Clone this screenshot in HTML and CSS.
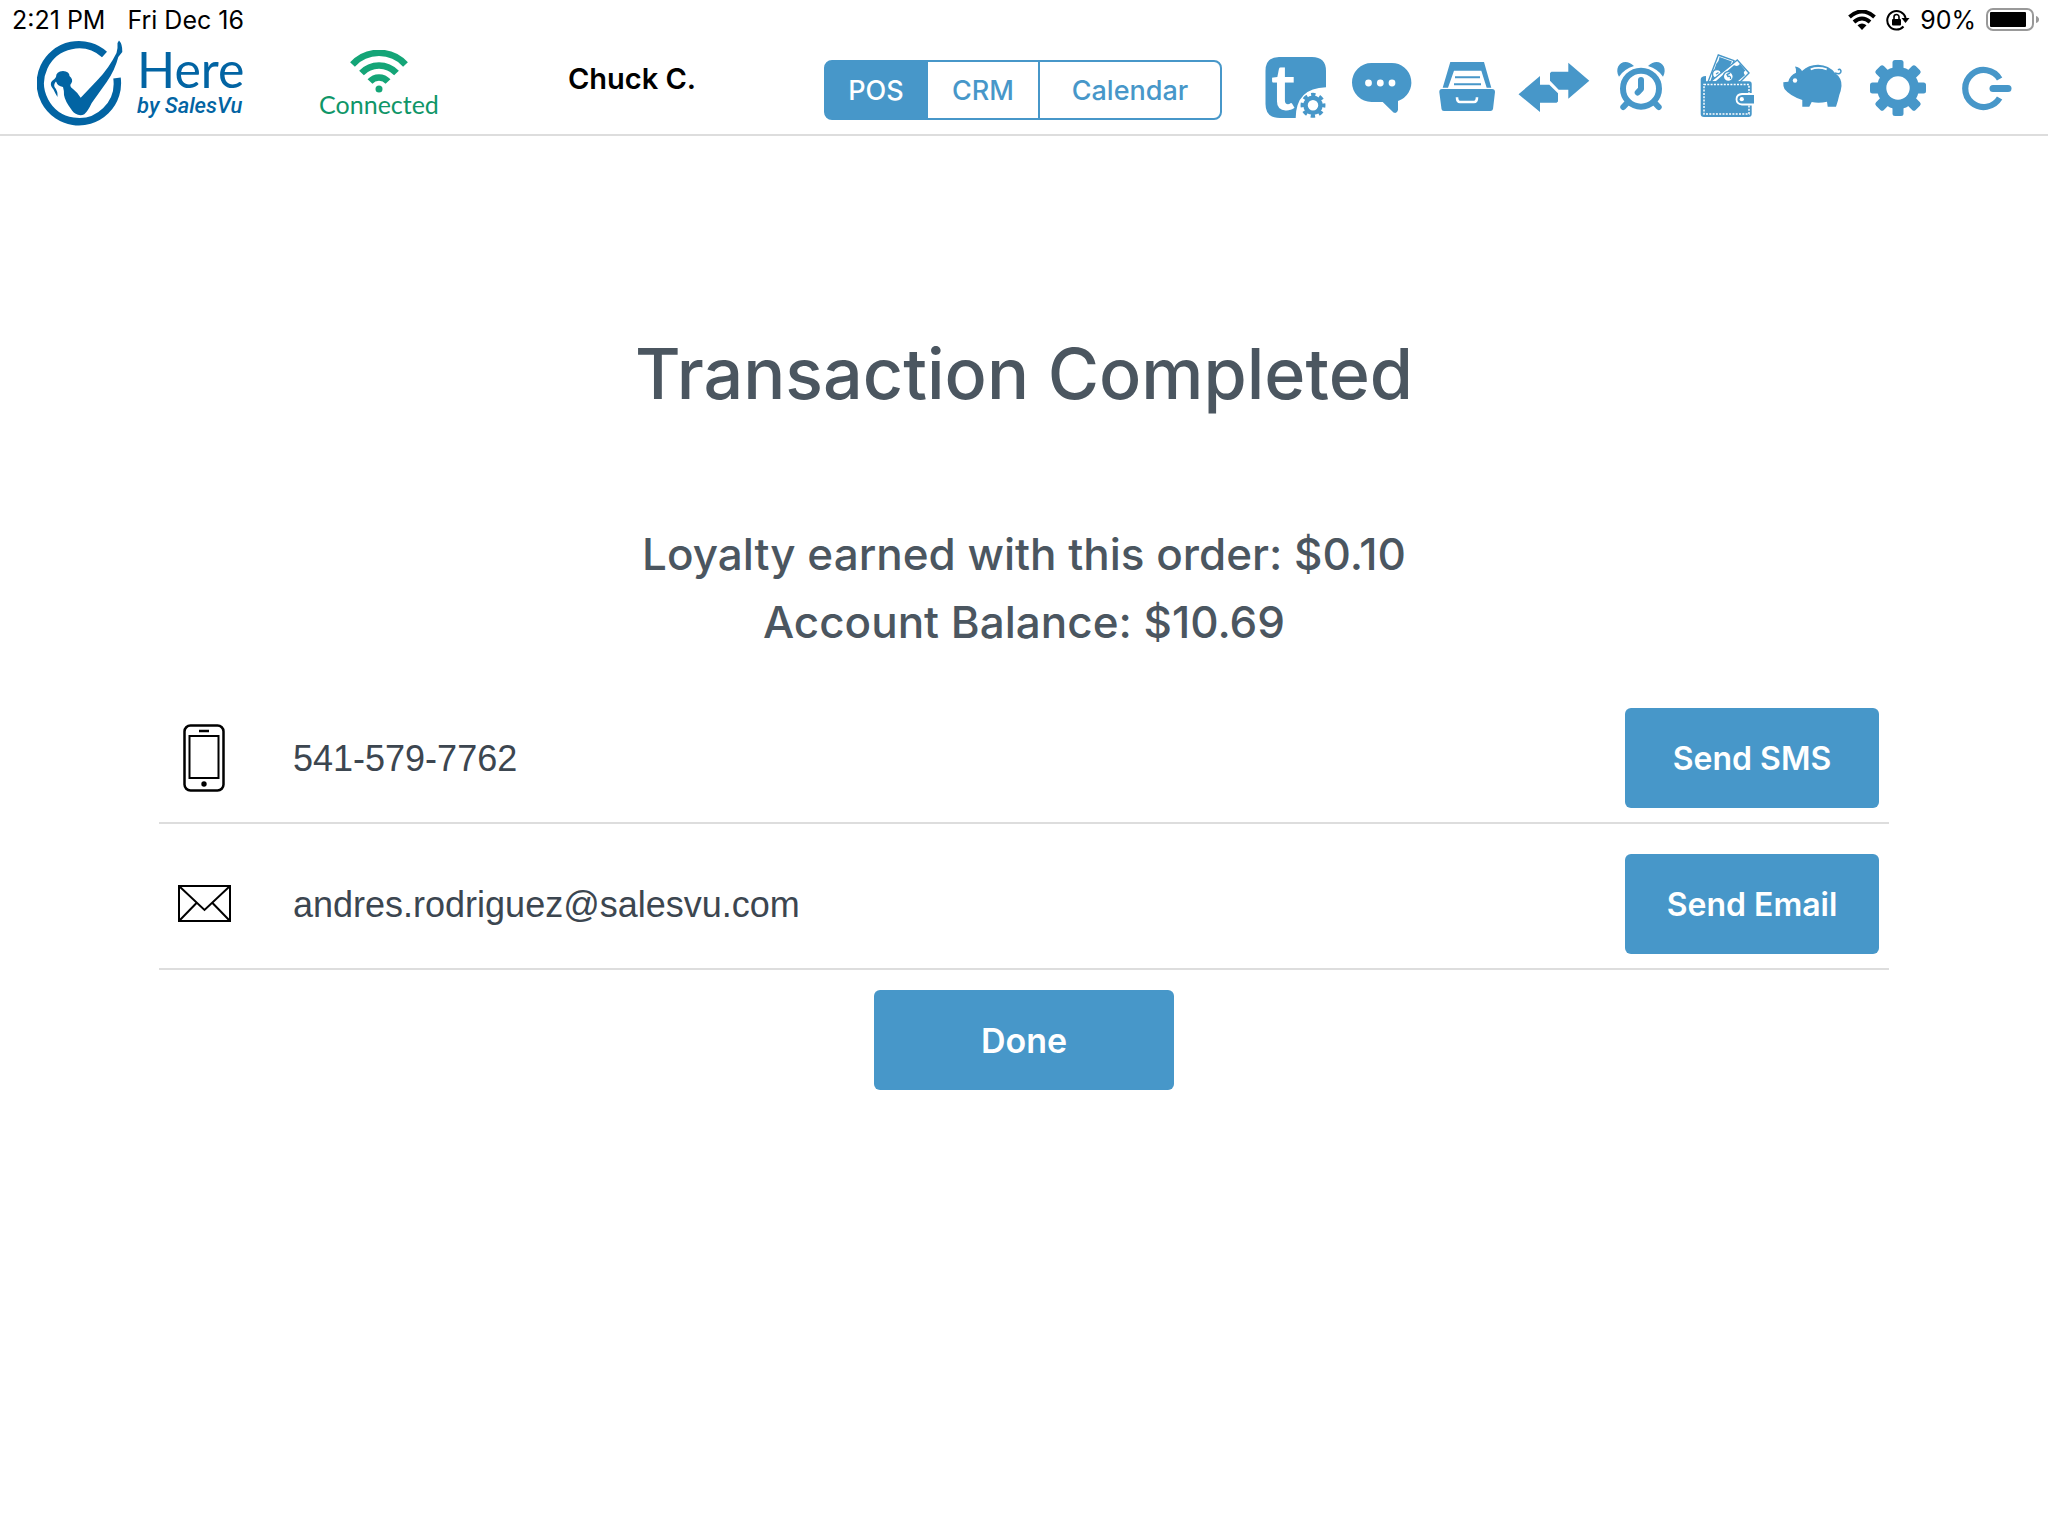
FILE: index.html
```html
<!DOCTYPE html>
<html lang="en">
<head>
    <meta charset="UTF-8">
    <meta name="viewport" content="width=device-width, initial-scale=1.0">
    <title>Transaction Completed</title>
    <link rel="stylesheet" href="styles.css">
</head>
<body>
    <div class="status-bar">
        <span class="status-time">2:21 PM</span>
        <span class="status-date">Fri Dec 16</span>
        <div class="status-right">
            <svg width="28" height="20" viewBox="0 0 28 20">
                <path d="M14 20 L9.5 15.3 Q14 11.5 18.5 15.3 Z"/>
                <path d="M1.5 7 Q14 -4 26.5 7 M6 12 Q14 5 22 12" fill="none" stroke="#000" stroke-width="4"/>
            </svg>
            <svg width="24" height="22" viewBox="0 0 24 22">
                <path d="M17.5 17.5 A9.3 9.3 0 1 1 19.6 9" fill="none" stroke="#000" stroke-width="2"/>
                <path d="M15.5 9 H23.5 L19.5 14 Z"/>
                <rect x="6" y="10" width="9" height="6.5" rx="1"/>
                <path d="M8 10 V8 a2.5 2.5 0 0 1 5 0 V10" fill="none" stroke="#000" stroke-width="1.6"/>
            </svg>
            <span>90%</span>
            <svg width="54" height="24" viewBox="0 0 54 24">
                <rect x="1" y="1" width="46" height="21" rx="6" fill="none" stroke="#999" stroke-width="2"/>
                <rect x="4" y="4" width="36" height="15" rx="1"/>
                <path d="M50 8 Q53 9 53 11.500 Q53 14 50 15 Z" fill="#999"/>
            </svg>
        </div>
    </div>

    <header class="header">
        <div class="brand">
            <svg width="86" height="87" viewBox="0 -1 86 87">
                <path d="M67.500 13.500 A38.500 38.500 0 1 0 80 37" fill="none" stroke="#0264a3" stroke-width="7.500"/>
                <path fill="#0264a3" d="M82 -.5 Q85.500 3 85.300 11 L81.300 16 Q78 29 69.700 41 L54.700 62 Q51 70 47.300 73.300 Q44 75 41 73.800 Q36 72 34 68 Q28 60 27 54 Q27 49 26 46 Q20.500 45 19 40.500 Q16.500 43 17.500 46 Q21 50 20.500 56 Q18 52 16.500 48.500 Q12 43.500 15 40 Q18 38 19 36 Q19 30.500 26 30 Q32.500 30.500 32.500 35 Q36.500 38.500 34.500 42 Q31.500 45 36 48 Q40 51 43.700 56.700 L61 38.500 Q72 27 79.500 12 Q81 7 80.500 2 Z"/>
            </svg>
            <div class="brand-text">
                <span class="brand-name">Here</span>
                <span class="brand-by">by SalesVu</span>
            </div>
        </div>

        <div class="connection">
            <svg width="58" height="43" viewBox="0 0 58 43">
                <circle cx="29" cy="39" r="3.500" fill="#14a577"/>
                <path d="M2.500 14.500 A36 36 0 0 1 55.500 14.500 M11.500 23 A24 24 0 0 1 46.500 23 M20 31.500 A12 12 0 0 1 38 31.500" fill="none" stroke="#14a577" stroke-width="6.500"/>
            </svg>
            <span>Connected</span>
        </div>

        <div class="user">Chuck C.</div>

        <nav class="tabs">
            <button class="tab tab-pos active">POS</button>
            <button class="tab tab-crm">CRM</button>
            <button class="tab tab-calendar">Calendar</button>
        </nav>

        <div class="tools">
            <button class="tool" aria-label="Ticket settings">
                <svg viewBox="0 0 72 66">
                    <path d="M19 4 H52 Q66 4 66 18 V34.300 Q36 35 35.700 65 H20 Q5.500 65 5.500 51 V18 Q5.500 4 19 4 Z"/>
                    <text class="tool-letter" x="11" y="57">t</text>
                    <circle cx="53" cy="52.300" r="7.500" fill="none" stroke="#4797c9" stroke-width="4.500"/>
                    <circle cx="53" cy="52.300" r="10.700" fill="none" stroke="#4797c9" stroke-width="3.500" stroke-dasharray="4.400 4" stroke-dashoffset="2.200"/>
                </svg>
            </button>
            <button class="tool" aria-label="Messages">
                <svg viewBox="0 0 72 66">
                    <path d="M25.500 10 H45.500 A19.500 19.500 0 0 1 52 48 V57 Q51 61 47.500 59.500 L36.700 49 H25.500 A19.500 19.500 0 0 1 25.500 10 Z"/>
                    <g fill="#fff"><circle cx="22.500" cy="30" r="3.400"/><circle cx="34.300" cy="30" r="3.400"/><circle cx="46" cy="30" r="3.400"/></g>
                </svg>
            </button>
            <button class="tool" aria-label="Cash drawer">
                <svg viewBox="0 0 72 66">
                    <path d="M18.300 9 H52 L59.300 34.700 H54.700 L49.300 17.700 H22 L16 34.700 H10.700 Z"/>
                    <path d="M23 24.300 H48 M22 31.300 H49" stroke="#4797c9" stroke-width="2"/>
                    <path d="M10 36 H60 Q63 36 63 39 L61 56 Q60.500 58 58.500 58 H12 Q9.700 58 9.500 56 L7.300 39 Q7.300 36 10 36 Z"/>
                    <path d="M25 44.300 Q25 49 28 49 H42 Q45 49 45 44.300" fill="none" stroke="#fff" stroke-width="2.600"/>
                </svg>
            </button>
            <button class="tool" aria-label="Transfer">
                <svg viewBox="0 0 72 66">
                    <path d="M.5 41.300 L22 23 V31.700 H31.300 L40 40.300 V48.500 L38.500 49.700 H22 V59 Z"/>
                    <path d="M71.300 27.700 L50.300 9.700 V18.700 H33.500 L32 20 V27.700 L40.700 36.700 H50.300 V45.700 Z"/>
                </svg>
            </button>
            <button class="tool" aria-label="Time clock">
                <svg viewBox="0 0 72 66">
                    <g fill="none" stroke="#4797c9" stroke-width="6" stroke-linecap="round" stroke-linejoin="round">
                        <circle cx="37" cy="35.700" r="18"/>
                        <path d="M37 27 V36 L33.700 39.500 M19.300 54 L24 49 M54.700 54 L50 49"/>
                    </g>
                    <path d="M15 23.700 C9 13 20 3 30 13 Q20 16 15 23.700 Z M59 23.700 C65 13 54 3 44 13 Q54 16 59 23.700 Z"/>
                </svg>
            </button>
            <button class="tool" aria-label="Wallet">
                <svg viewBox="0 0 72 66">
                    <g stroke="#4797c9" stroke-width="1.400" fill="#fff">
                        <path d="M28.300 2 L44 7.700 L36 29 H18 Z"/>
                        <path d="M30 5 L41 9 L32 27 H21.500 L27 11 Q29.500 9 30 5 Z" fill="#4797c9"/>
                        <circle cx="27" cy="21" r="4.500"/>
                        <path d="M26 21 L28.500 19.500"/>
                        <path d="M47.300 7 L59 20 L50 29 H20 Z"/>
                        <path d="M44 13 Q48 15 50 12 L54.500 17.500 Q52 19 54 22 L47 28 H27 Z" fill="#4797c9"/>
                        <circle cx="38.300" cy="23.500" r="5"/>
                        <path d="M40 20 L37 21.500 L38 23.500 Q41 22.500 40.500 26" fill="none"/>
                    </g>
                    <path d="M16 23 V28.300 H59 Q61.700 28.300 61.700 31 V61 Q61.700 64 58.500 64 H14 Q10.700 64 10.700 61 V26.500 Q10.700 23 16 23 Z"/>
                    <rect x="14" y="31.500" width="45" height="29.500" fill="none" stroke="#fff" stroke-width="1.500" stroke-dasharray="2 1.300"/>
                    <path d="M64 41 H52 Q46.500 41.500 46.500 46.300 Q46.500 51 52 51.500 H64" stroke="#fff" stroke-width="1.800"/>
                    <circle cx="51.800" cy="46.200" r="2.100" fill="#fff"/>
                </svg>
            </button>
            <button class="tool" aria-label="Piggy bank">
                <svg viewBox="0 0 72 66">
                    <path d="M7.300 29.300 L12.300 28.700 Q14 22 20 19.700 Q20.500 16 19 13.500 Q24 14 26 18 Q33 11.500 42.300 11.700 Q53 12 59 20 Q66 25 65.500 33 Q65 38 63.300 42 Q62 48 60 53.700 H51.700 L51 48.700 Q43 50.500 35.700 49 L33.300 53.700 H26.300 V47 Q14 43 8.500 36 Q7 33 7.300 29.300 Z"/>
                    <path d="M59 20 Q65 22 65 18 Q64 15 62 17" fill="none" stroke="#4797c9" stroke-width="1.500"/>
                    <circle cx="19" cy="27.500" r="2.200" fill="#fff"/>
                    <path d="M34.700 16.300 Q42 13.500 50.700 16.300" fill="none" stroke="#fff" stroke-width="1.800"/>
                </svg>
            </button>
            <button class="tool" aria-label="Settings">
                <svg viewBox="0 0 72 66">
                    <rect x="30.500" y="7" width="11" height="56" rx="2.500"/>
                    <rect x="30.500" y="7" width="11" height="56" rx="2.500" transform="rotate(45 36 35)"/>
                    <rect x="30.500" y="7" width="11" height="56" rx="2.500" transform="rotate(90 36 35)"/>
                    <rect x="30.500" y="7" width="11" height="56" rx="2.500" transform="rotate(135 36 35)"/>
                    <circle cx="36" cy="35" r="21"/>
                    <circle cx="36" cy="35" r="11.700" fill="#fff"/>
                </svg>
            </button>
            <button class="tool" aria-label="Log out">
                <svg viewBox="0 0 72 66">
                    <path d="M51.600 26 A18.500 18.500 0 1 0 51.600 45" fill="none" stroke="#4797c9" stroke-width="6.200"/>
                    <path d="M45 35.500 H60" stroke="#4797c9" stroke-width="7" stroke-linecap="round"/>
                </svg>
            </button>
        </div>
    </header>

    <main class="content">
        <h1 class="title">Transaction Completed</h1>
        <div class="loyalty">
            <div>Loyalty earned with this order: $0.10</div>
            <div>Account Balance: $10.69</div>
        </div>

        <form class="receipt">
            <div class="receipt-row">
                <label class="receipt-icon" for="phone" aria-label="Phone number">
                    <svg width="54" height="70" viewBox="0 0 54 70">
                        <g fill="none" stroke="#000" stroke-width="2.500">
                            <rect x="6.500" y="2.500" width="39" height="65" rx="6"/>
                            <rect x="11.500" y="13" width="29" height="42" stroke-width="2"/>
                            <path d="M21 8 H31"/>
                        </g>
                        <circle cx="26" cy="61" r="2.700"/>
                    </svg>
                </label>
                <input class="receipt-input" id="phone" type="tel" value="541-579-7762">
                <button class="btn btn-send" type="button">Send SMS</button>
            </div>
            <div class="receipt-row">
                <label class="receipt-icon" for="email" aria-label="Email address">
                    <svg width="54" height="38" viewBox="0 0 54 38">
                        <g fill="none" stroke="#000" stroke-width="2">
                            <rect x="1" y="1" width="51" height="35"/>
                            <path d="M1 1 L26.500 25 L52 1 M1 36 L18.500 18 M52 36 L34.500 18"/>
                        </g>
                    </svg>
                </label>
                <input class="receipt-input" id="email" type="email" value="andres.rodriguez@salesvu.com">
                <button class="btn btn-send" type="button">Send Email</button>
            </div>
            <button class="btn btn-done" type="button">Done</button>
        </form>
    </main>
</body>
</html>
```
FILE: styles.css
```css
* {
    box-sizing: border-box;
}
body {
    margin: 0;
    background: #fff;
    color: #4b5660;
    font-family: Inter, "Liberation Sans", sans-serif;
}
button {
    border: none;
    background: none;
    padding: 0;
    font-family: inherit;
    cursor: pointer;
}
svg {
    display: block;
}

/* status bar */
.status-bar {
    display: flex;
    align-items: center;
    gap: 22px;
    height: 40px;
    padding: 0 8px 0 12px;
    color: #000;
    font-size: 25px;
}
.status-right {
    display: flex;
    align-items: center;
    gap: 10px;
    margin-left: auto;
}

/* header */
.header {
    display: grid;
    grid-template-columns: 223px 238px 1fr auto auto;
    align-items: center;
    height: 96px;
    padding: 0 28px 0 37px;
    border-bottom: 2px solid #ddd;
}
.brand {
    display: flex;
    align-self: start;
    gap: 14px;
    color: #0264a3;
}
.brand-text {
    display: flex;
    flex-direction: column;
    padding-top: 4px;
}
.brand-name {
    font-family: Lato, sans-serif;
    font-size: 50px;
    line-height: 50px;
}
.brand-by {
    font-family: Roboto, sans-serif;
    font-size: 22px;
    font-style: italic;
    font-weight: 500;
    line-height: 24px;
    white-space: nowrap;
}
.connection {
    display: flex;
    flex-direction: column;
    align-self: start;
    align-items: center;
    padding-top: 10px;
    color: #0f9668;
    font-family: Lato, sans-serif;
    font-size: 25px;
    line-height: 22px;
}
.user {
    margin-bottom: 18px;
    color: #000;
    font-size: 29px;
    font-weight: 600;
    text-align: center;
}
.tabs {
    display: flex;
    height: 60px;
    margin: 6px 38px 0 58px;
    border: 2px solid #4797c9;
    border-radius: 8px;
}
.tab {
    color: #4797c9;
    font-size: 27px;
    font-weight: 500;
}
.tab + .tab {
    border-left: 2px solid #4797c9;
}
.tab.active {
    background: #4797c9;
    color: #fff;
    border-radius: 4px 0 0 4px;
}
.tab-pos {
    width: 100px;
}
.tab-crm {
    width: 112px;
}
.tab-calendar {
    width: 182px;
}
.tools {
    display: flex;
    gap: 14px;
    margin-bottom: 2px;
}
.tool svg {
    width: 72px;
    height: 66px;
    fill: #4797c9;
}
.tool-letter {
    fill: #fff;
    font-family: Lato, sans-serif;
    font-size: 64px;
    font-weight: 700;
}

/* transaction summary */
.content {
    display: flex;
    flex-direction: column;
    align-items: center;
    padding: 198px 159px 0;
}
.title {
    margin: 0;
    font-size: 70px;
    font-weight: 500;
    line-height: 80px;
}
.loyalty {
    margin-top: 106px;
    font-size: 44px;
    font-weight: 500;
    line-height: 68px;
    text-align: center;
}

/* receipt options */
.receipt {
    display: flex;
    flex-direction: column;
    width: 100%;
    margin-top: 22px;
}
.receipt-row {
    display: flex;
    align-items: center;
    padding: 30px 10px 14px 19px;
    border-bottom: 2px solid #ddd;
}
.receipt-icon {
    width: 115px;
}
.receipt-input {
    flex: 1;
    padding: 2px 0 0;
    border: none;
    outline: none;
    background: none;
    color: #3c4650;
    font-family: "Liberation Sans", sans-serif;
    font-size: 36px;
}
.btn {
    height: 100px;
    border-radius: 6px;
    background: #4797c9;
    color: #fff;
    font-weight: 600;
}
.btn-send {
    width: 254px;
    font-size: 32px;
}
.btn-done {
    align-self: center;
    width: 300px;
    margin-top: 20px;
    font-size: 34px;
}
```
